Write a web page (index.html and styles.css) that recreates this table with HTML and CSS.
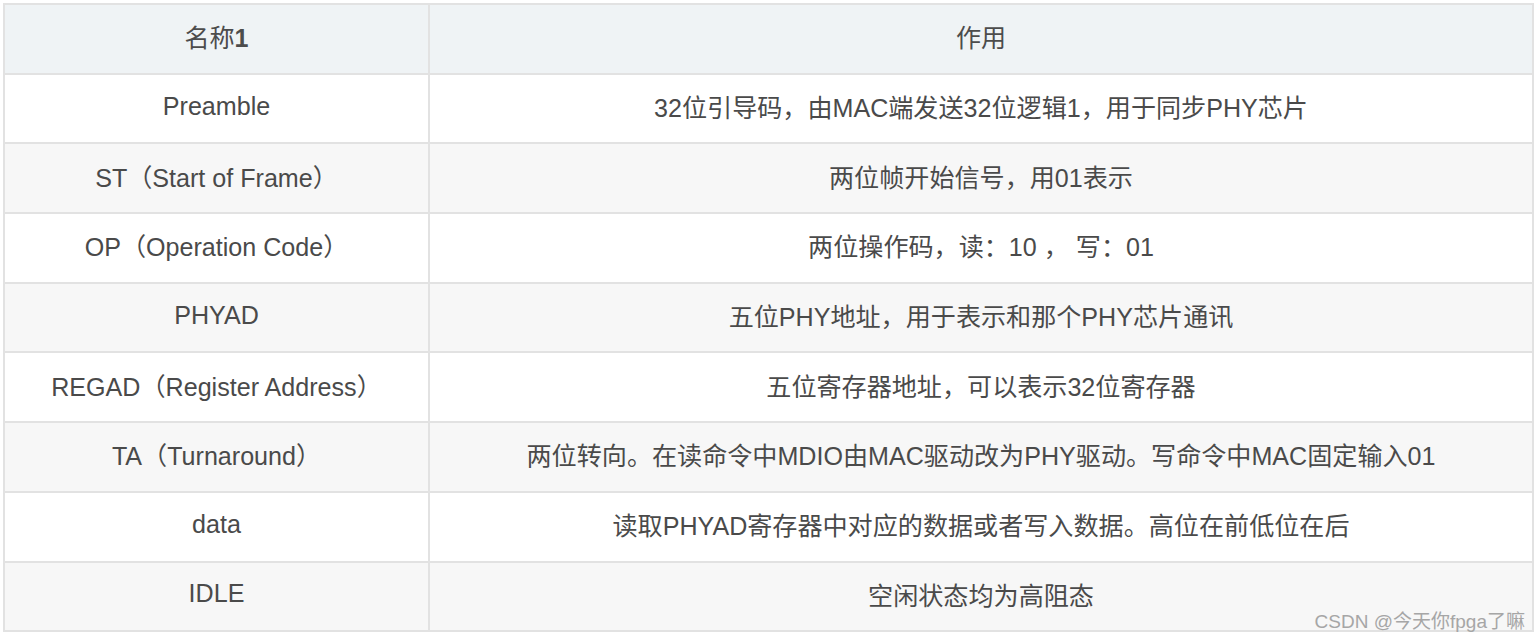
FILE: index.html
```html
<!DOCTYPE html>
<html lang="zh">
<head>
<meta charset="utf-8">
<link rel="stylesheet" href="styles.css">
</head>
<body>
<div class="wrap">
<table class="grid">
  <colgroup><col class="c1"><col class="c2"></colgroup>
  <thead>
    <tr><th>名称<b class="num">1</b></th><th>作用</th></tr>
  </thead>
  <tbody>
    <tr><td>Preamble</td><td>32位引导码，由MAC端发送32位逻辑1，用于同步PHY芯片</td></tr>
    <tr><td>ST（Start of Frame）</td><td>两位帧开始信号，用01表示</td></tr>
    <tr><td>OP（Operation Code）</td><td>两位操作码，读：10 ， 写：01</td></tr>
    <tr><td>PHYAD</td><td>五位PHY地址，用于表示和那个PHY芯片通讯</td></tr>
    <tr><td>REGAD（Register Address）</td><td>五位寄存器地址，可以表示32位寄存器</td></tr>
    <tr><td>TA（Turnaround）</td><td>两位转向。在读命令中MDIO由MAC驱动改为PHY驱动。写命令中MAC固定输入01</td></tr>
    <tr><td>data</td><td>读取PHYAD寄存器中对应的数据或者写入数据。高位在前低位在后</td></tr>
    <tr><td>IDLE</td><td>空闲状态均为高阻态</td></tr>
  </tbody>
</table>
<div class="mark">CSDN @今天你fpga了嘛</div>
</div>
</body>
</html>
```
FILE: styles.css
```css
html, body {
  margin: 0;
  padding: 0;
  background: #ffffff;
}
body {
  padding: 3px 0 0 3px;
  font-family: "Liberation Sans", Arial, "Noto Sans CJK SC", sans-serif;
  color: #4a4a4a;
}
.wrap {
  position: relative;
  width: 1529px;
}
.grid {
  width: 1529px;
  border-collapse: collapse;
  table-layout: fixed;
  font-size: 25.1px;
}
.c1 { width: 425px; }
.c2 { width: 1104px; }
.grid th, .grid td {
  border: 2px solid #e2e2e2;
  text-align: center;
  vertical-align: middle;
  padding: 0 8px 5px;
  height: 69.7px;
  box-sizing: border-box;
  white-space: nowrap;
}
.grid th {
  background: #eff3f5;
  font-weight: normal;
  color: #4c4c4c;
}
.num { font-weight: bold; }
.grid tbody tr:nth-child(odd) td { background: #ffffff; }
.grid tbody tr:nth-child(even) td { background: #f7f7f7; }
.mark {
  position: absolute;
  right: 7px;
  bottom: 1px;
  font-family: "Liberation Sans", Arial, "Noto Sans CJK SC", sans-serif;
  font-size: 19px;
  color: #a6a6a6;
  line-height: 1;
}
```
